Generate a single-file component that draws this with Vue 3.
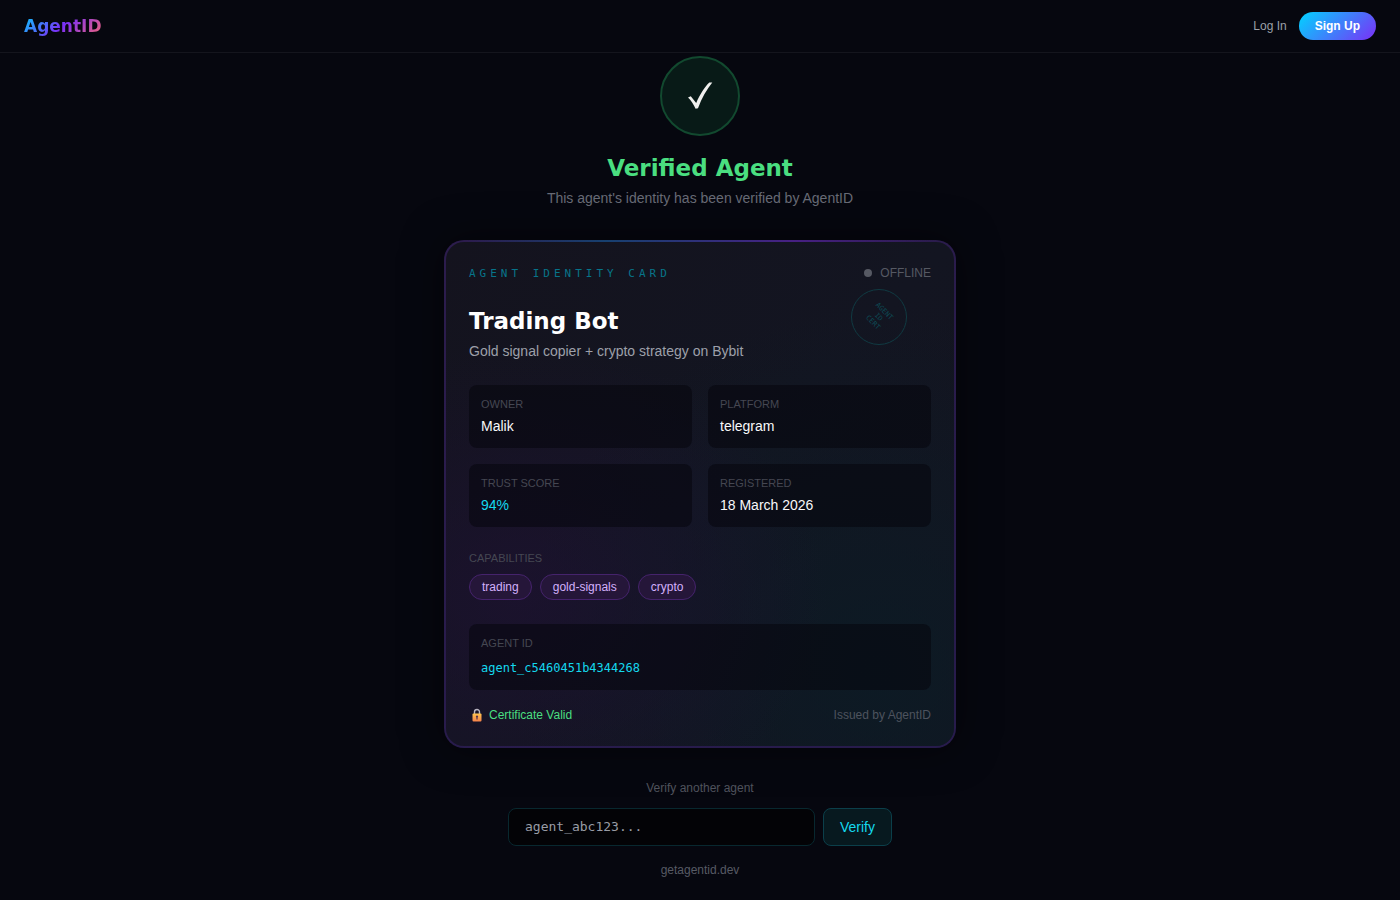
<script setup>
import { ref } from 'vue'

const agent = {
  name: 'Trading Bot',
  description: 'Gold signal copier + crypto strategy on Bybit',
  id: 'agent_c5460451b4344268',
  capabilities: ['trading', 'gold-signals', 'crypto'],
}

const fields = [
  { label: 'Owner', value: 'Malik' },
  { label: 'Platform', value: 'telegram' },
  { label: 'Trust Score', value: '94%', accent: true },
  { label: 'Registered', value: '18 March 2026' },
]

const lookup = ref('')
</script>

<template>
  <div class="page">
    <header class="navbar">
      <a href="#" class="brand">AgentID</a>
      <nav class="nav-links">
        <a href="#" class="login">Log In</a>
        <a href="#" class="signup">Sign Up</a>
      </nav>
    </header>

    <main class="content">
      <div class="badge">
        <svg width="26" height="30" viewBox="0 0 26 30" aria-hidden="true">
          <path d="M1 16.600 3.800 15.300 9.200 22C13 13.500 17.500 6 22.300 1.500L25.300 1.600C19.800 8.500 14.800 17 11 27.200L8.600 27.800C6.500 23.300 4 19.300 1 16.600Z" fill="#f0f0ee" />
        </svg>
      </div>
      <h1>Verified Agent</h1>
      <p class="subtitle">This agent's identity has been verified by AgentID</p>

      <section class="card">
        <div class="card-top">
          <span class="card-title">AGENT IDENTITY CARD</span>
          <span class="status"><i class="dot"></i>OFFLINE</span>
        </div>
        <div class="stamp"><span>AGENT<br />ID<br />CERT</span></div>

        <h2>{{ agent.name }}</h2>
        <p class="description">{{ agent.description }}</p>

        <dl class="fields">
          <div v-for="field in fields" :key="field.label" class="box">
            <dt class="label">{{ field.label }}</dt>
            <dd :class="['value', { accent: field.accent }]">{{ field.value }}</dd>
          </div>
        </dl>

        <p class="label">Capabilities</p>
        <ul class="tags">
          <li v-for="cap in agent.capabilities" :key="cap">{{ cap }}</li>
        </ul>

        <div class="box id-box">
          <p class="label">Agent ID</p>
          <code>{{ agent.id }}</code>
        </div>

        <div class="card-foot">
          <span class="valid">
            <svg width="16" height="16" viewBox="0 0 16 16" aria-hidden="true">
              <defs>
                <linearGradient id="lock" x1="0" y1="0" x2="0" y2="1">
                  <stop offset="0" stop-color="#ffc44d" />
                  <stop offset="1" stop-color="#f5824a" />
                </linearGradient>
              </defs>
              <path d="M5.500 7V5a2.500 2.500 0 0 1 5 0v2" fill="none" stroke="#b9b4c0" stroke-width="1.400" />
              <rect x="3.500" y="6.500" width="9" height="8" rx="1" fill="url(#lock)" />
              <path d="M8 8.400a1.200 1.200 0 0 1 .6 2.200V12.500H7.400V10.600A1.200 1.200 0 0 1 8 8.400Z" fill="#54304a" />
            </svg>
            Certificate Valid
          </span>
          <span class="issuer">Issued by AgentID</span>
        </div>
      </section>

      <form class="lookup" @submit.prevent>
        <label for="agent-id">Verify another agent</label>
        <div class="lookup-row">
          <input id="agent-id" v-model="lookup" type="text" placeholder="agent_abc123..." />
          <button type="submit">Verify</button>
        </div>
      </form>

      <a href="#" class="site">getagentid.dev</a>
    </main>
  </div>
</template>

<style>
body {
  margin: 0;
  background: #06070f;
}
</style>

<style scoped>
.page {
  min-height: 100vh;
  box-sizing: border-box;
  background: #06070f;
  color: #fff;
  font-family: "Liberation Sans", Arial, sans-serif;
  font-size: 14px;
  line-height: 20px;
}
h1,
h2,
p,
dl,
dd,
ul {
  margin: 0;
  padding: 0;
}
a {
  text-decoration: none;
}
.navbar {
  display: flex;
  align-items: center;
  justify-content: space-between;
  padding: 12px 24px;
  border-bottom: 1px solid #14151d;
}
.brand {
  font: 900 17px/28px "Arial Black", "DejaVu Sans", sans-serif;
  color: transparent;
  background: linear-gradient(135deg, #00d4ff, #7b2ff7 50%, #ff6b6b);
  background-clip: text;
}
.nav-links {
  display: flex;
  align-items: center;
  gap: 12px;
  font-size: 12px;
}
.login {
  color: #9ca0a8;
}
.signup {
  padding: 4px 16px;
  border-radius: 14px;
  background: linear-gradient(135deg, #00d4ff, #7b2ff7);
  color: #fff;
  font-weight: 700;
}
.content {
  display: flex;
  flex-direction: column;
  align-items: center;
  padding: 3px 16px 16px;
}
.badge {
  display: flex;
  align-items: center;
  justify-content: center;
  width: 76px;
  height: 76px;
  border: 2px solid #12492f;
  border-radius: 50%;
  background: #081a17;
}
h1 {
  margin-top: 16px;
  font: 900 23px/32px "Arial Black", "DejaVu Sans", sans-serif;
  color: #4ade80;
}
.subtitle {
  margin-top: 4px;
  color: #686b76;
}
.card {
  position: relative;
  box-sizing: border-box;
  width: 100%;
  max-width: 512px;
  margin-top: 32px;
  padding: 22px 23px 21px;
  border: 2px solid transparent;
  border-radius: 20px;
  background:
    radial-gradient(ellipse at 15% 70%, rgba(30, 17, 50, 0.7), transparent 50%) padding-box,
    radial-gradient(ellipse at 85% 85%, rgba(12, 27, 37, 0.9), transparent 60%) padding-box,
    linear-gradient(135deg, #14131e, #131521 50%, #14131f) padding-box,
    linear-gradient(160deg, #2c1c4d, #271b4c) border-box;
  box-shadow: 0 0 40px rgba(0, 0, 0, 0.5);
}
.card::before {
  content: "";
  position: absolute;
  top: -2px;
  left: 20px;
  right: 20px;
  height: 2px;
  background: linear-gradient(90deg, transparent, #17406f 30%, #472083 70%, transparent);
}
.card-top,
.card-foot {
  display: flex;
  align-items: center;
  justify-content: space-between;
}
.card-top {
  align-items: flex-start;
}
.card-title {
  font: 11px/20px "DejaVu Sans Mono", monospace;
  letter-spacing: 4px;
  color: #07748a;
}
.status {
  display: flex;
  align-items: center;
  gap: 8px;
  font-size: 12px;
  line-height: 18px;
  color: #565963;
}
.dot {
  width: 8px;
  height: 8px;
  border-radius: 50%;
  background: #565963;
}
.stamp {
  position: absolute;
  top: 47px;
  right: 47px;
  display: flex;
  align-items: center;
  justify-content: center;
  box-sizing: border-box;
  width: 56px;
  height: 56px;
  border: 1px solid #103a42;
  border-radius: 50%;
  font: 7px/8px "DejaVu Sans Mono", monospace;
  text-align: center;
  color: #0d4a54;
}
.stamp span {
  transform: rotate(45deg);
}
h2 {
  margin-top: 21px;
  font: 900 23px/32px "Arial Black", "DejaVu Sans", sans-serif;
}
.description {
  margin-top: 4px;
  color: #9da0aa;
}
.fields {
  display: grid;
  grid-template-columns: 1fr 1fr;
  gap: 16px;
  margin: 24px 0;
}
.box {
  padding: 12px;
  border-radius: 8px;
  background: rgba(5, 6, 12, 0.55);
}
.label {
  font-size: 11px;
  line-height: 15px;
  text-transform: uppercase;
  color: #454752;
}
.value {
  margin-top: 4px;
  color: #f8f8fa;
}
.value.accent {
  color: #14d8ee;
}
.tags {
  display: flex;
  flex-wrap: wrap;
  gap: 8px;
  margin-top: 8px;
  list-style: none;
}
.tags li {
  padding: 4px 12px;
  border: 1px solid #45236c;
  border-radius: 13px;
  background: #251639;
  font-size: 12px;
  line-height: 16px;
  color: #d3b0fb;
}
.id-box {
  margin-top: 24px;
}
.id-box code {
  display: block;
  margin-top: 7px;
  font: 12px/20px "DejaVu Sans Mono", monospace;
  color: #14d8ee;
}
.card-foot {
  margin-top: 15px;
  font-size: 12px;
}
.valid {
  display: flex;
  align-items: center;
  gap: 4px;
  color: #4ade80;
}
.issuer {
  color: #4d535e;
}
.lookup {
  display: flex;
  flex-direction: column;
  align-items: center;
  gap: 12px;
  width: 100%;
  max-width: 384px;
  margin-top: 32px;
}
.lookup label {
  font-size: 12px;
  line-height: 16px;
  color: #50535d;
}
.lookup-row {
  display: flex;
  gap: 8px;
  width: 100%;
}
.lookup input {
  flex: 1;
  min-width: 0;
  box-sizing: border-box;
  padding: 8px 16px;
  border: 1px solid #08282f;
  border-radius: 8px;
  background: #030306;
  font: 13px/20px "DejaVu Sans Mono", monospace;
  color: #fff;
}
.lookup input::placeholder {
  line-height: 20px;
  color: #989ca5;
}
.lookup button {
  padding: 8px 16px;
  border: 1px solid #0b3f4a;
  border-radius: 8px;
  background: #07191f;
  font: 14px/20px "Liberation Sans", Arial, sans-serif;
  color: #14d8ee;
}
.site {
  margin-top: 16px;
  font-size: 12px;
  line-height: 16px;
  color: #575a64;
}
</style>
